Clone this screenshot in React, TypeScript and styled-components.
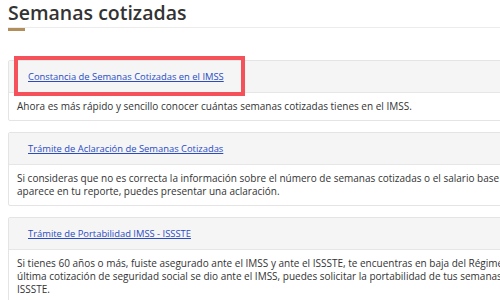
import React from "react";
import styled, { createGlobalStyle } from "styled-components";

interface Tramite {
  title: string;
  lines: string[];
  highlighted?: boolean;
}

// lines follow the wrapping of the original (wider) page
const tramites: Tramite[] = [
  {
    title: "Constancia de Semanas Cotizadas en el IMSS",
    lines: ["Ahora es más rápido y sencillo conocer cuántas semanas cotizadas tienes en el IMSS."],
    highlighted: true,
  },
  {
    title: "Trámite de Aclaración de Semanas Cotizadas",
    lines: [
      "Si consideras que no es correcta la información sobre el número de semanas cotizadas o el salario base de cotización que",
      "aparece en tu reporte, puedes presentar una aclaración.",
    ],
  },
  {
    title: "Trámite de Portabilidad IMSS - ISSSTE",
    lines: [
      "Si tienes 60 años o más, fuiste asegurado ante el IMSS y ante el ISSSTE, te encuentras en baja del Régimen Obligatorio y tu",
      "última cotización de seguridad social se dio ante el IMSS, puedes solicitar la portabilidad de tus semanas de cotización al",
      "ISSSTE.",
    ],
  },
];

const GlobalStyle = createGlobalStyle`
  html, body {
    margin: 0;
    padding: 0;
    background: #ffffff;
    overflow: hidden;
  }
  body {
    font-family: "Open Sans", Lato, sans-serif;
    color: #333333;
  }
`;

const Page = styled.div`
  padding: 0 0 0 8px;
  width: 640px;
`;

const Title = styled.h1`
  margin: 0;
  font-size: 19.5px;
  line-height: 25px;
  font-weight: 600;
  color: #333333;
`;

const TitleRule = styled.div`
  margin-top: 2px;
  height: 1px;
  background: #ececec;
`;

const GoldBar = styled.div`
  width: 17px;
  height: 3px;
  background: #b38e5d;
`;

const List = styled.div`
  margin-top: 29px;
  display: flex;
  flex-direction: column;
  gap: 11px;
`;

const Panel = styled.div`
  position: relative;
  border: 1px solid #e4e4e4;
  border-radius: 2px;
  background: #ffffff;
`;

const PanelHeading = styled.div`
  height: 31px;
  display: flex;
  align-items: center;
  padding-left: 19px;
  background: #f5f5f5;
  border-bottom: 1px solid #e6e6e6;
`;

const Link = styled.a`
  font-size: 9.4px;
  color: #2a4bc2;
  text-decoration: underline;
  text-underline-offset: 1px;
  cursor: pointer;
`;

const PanelBody = styled.div`
  padding: 7px 8px;
  font-size: 10px;
  line-height: 13px;
  color: #333333;
  white-space: nowrap;
`;

const Highlight = styled.div`
  position: absolute;
  left: 5px;
  top: -5px;
  width: 223px;
  height: 32px;
  border: 4px solid #f5515a;
  pointer-events: none;
`;

const App: React.FC = () => {
  return (
    <>
      <GlobalStyle />
      <Page>
        <Title>Semanas cotizadas</Title>
        <TitleRule />
        <GoldBar />
        <List>
          {tramites.map((t) => (
            <Panel key={t.title}>
              <PanelHeading>
                <Link>{t.title}</Link>
              </PanelHeading>
              <PanelBody>
                {t.lines.map((line, i) => (
                  <React.Fragment key={i}>
                    {i > 0 && <br />}
                    {line}
                  </React.Fragment>
                ))}
              </PanelBody>
              {t.highlighted && <Highlight />}
            </Panel>
          ))}
        </List>
      </Page>
    </>
  );
};

export default App;
